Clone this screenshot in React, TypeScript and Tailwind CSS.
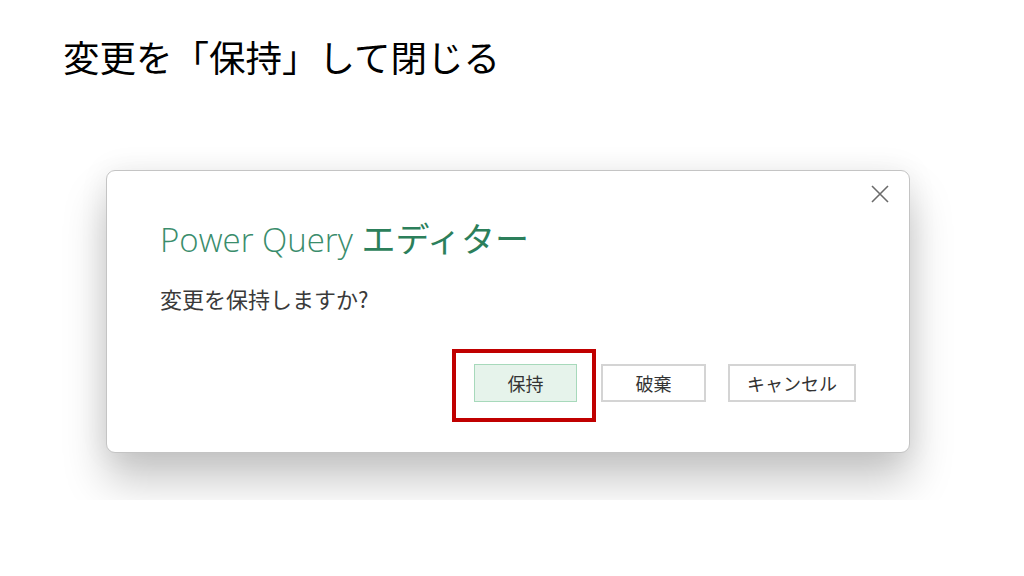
export default function App() {
  return (
    <div className="w-[1024px] h-[576px] bg-white overflow-hidden flex flex-col">
      <h1 className="pt-[32px] pl-[63px] text-[36.5px] leading-[50px] text-black font-['Noto_Sans_CJK_JP',sans-serif] font-normal">
        変更を「保持」して閉じる
      </h1>

      {/* screenshot area */}
      <div className="mt-[58px] ml-[50px] w-[922px] h-[360px] overflow-hidden bg-white pt-[30px] pl-[56px]">
        <div className="relative w-[804px] h-[283px] bg-white rounded-[9px] border border-[#c4c4c4] shadow-[0_28px_44px_rgba(0,0,0,0.22),0_0_30px_rgba(0,0,0,0.07)] px-[53px] pt-[46px]">
          <button className="absolute top-[12px] right-[18px] w-[22px] h-[22px] flex items-center justify-center">
            <svg width="20" height="20" viewBox="0 0 20 20">
              <path d="M2 2 L18 18 M18 2 L2 18" stroke="#6b6b6b" strokeWidth="1.6" fill="none" />
            </svg>
          </button>

          <h2 className="leading-[42px] text-[#2c7f5b] whitespace-nowrap">
            <span className="text-[33px] font-['Open_Sans',sans-serif] font-light text-[#3a8d6c]">Power Query </span>
            <span className="text-[34px] font-['Noto_Sans_CJK_JP',sans-serif] font-normal">エディター</span>
          </h2>

          <p className="mt-[16px] text-[22px] leading-[30px] text-[#3a3a3a] font-['Noto_Sans_CJK_JP',sans-serif]">
            変更を保持しますか?
          </p>

          <div className="mt-[51px] flex justify-end">
            <div className="relative">
              <button className="w-[103px] h-[38px] bg-[#e6f3eb] border border-[#a7d9bb] text-[18px] text-[#333] font-['Noto_Sans_CJK_JP',sans-serif]">
                保持
              </button>
              <div className="absolute -left-[22px] -top-[15px] w-[144px] h-[73px] border-[4px] border-[#c00000]" />
            </div>
            <button className="ml-[24px] w-[105px] h-[38px] bg-white border-2 border-[#d4d4d4] text-[18px] text-[#333] font-['Noto_Sans_CJK_JP',sans-serif]">
              破棄
            </button>
            <button className="ml-[22px] w-[128px] h-[38px] bg-white border-2 border-[#d4d4d4] text-[18px] text-[#333] font-['Noto_Sans_CJK_JP',sans-serif]">
              キャンセル
            </button>
          </div>
        </div>
      </div>
    </div>
  )
}
